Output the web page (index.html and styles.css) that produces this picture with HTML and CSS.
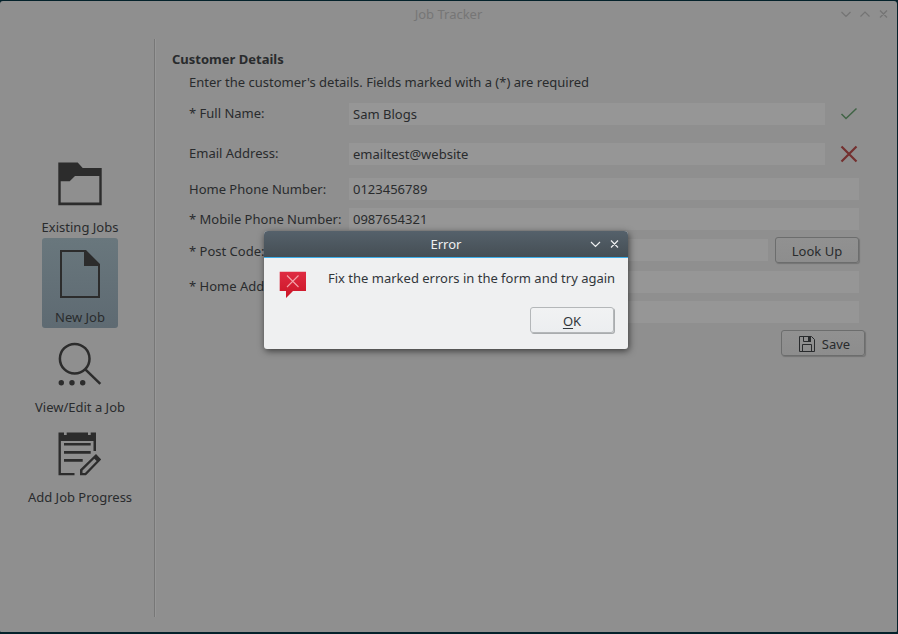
FILE: index.html
```html
<!DOCTYPE html>
<html lang="en">
<head>
<meta charset="utf-8">
<title>Job Tracker</title>
<link rel="stylesheet" href="styles.css">
</head>
<body>
<div class="window">
  <header class="titlebar">
    <span class="title">Job Tracker</span>
    <svg class="window-controls" width="50" height="12" viewBox="0 0 50 12"><path d="M1.500 4l4.500 4.500L10.500 4M20.500 8.500L25 4l4.500 4.500M40 2.500l7 7M47 2.500l-7 7"/></svg>
  </header>
  <div class="body">
    <nav class="sidebar">
      <a class="item">
        <svg width="48" height="48" viewBox="0 0 48 48"><path fill-rule="evenodd" d="M2.300 2.500H21.700L26.700 8H45.700V45.200H2.300ZM4.700 21.300V42.500H43.300V16H19L13.700 21.300Z"/></svg>
        <span>Existing Jobs</span>
      </a>
      <a class="item selected">
        <svg width="48" height="48" viewBox="0 0 48 48"><path fill-rule="evenodd" d="M4 0H30L44 14V48H4ZM6 2V46H42V16H28V2Z"/></svg>
        <span>New Job</span>
      </a>
      <a class="item">
        <svg width="48" height="48" viewBox="0 0 48 48"><circle class="line" cx="18.700" cy="18.700" r="14.800"/><path class="line" d="M29.300 29.300L44.300 43.800"/><circle cx="5.300" cy="42.700" r="2.700"/><circle cx="16" cy="42.700" r="2.700"/><circle cx="26.700" cy="42.700" r="2.700"/></svg>
        <span>View/Edit a Job</span>
      </a>
      <a class="item">
        <svg width="48" height="48" viewBox="0 0 48 48"><path fill-rule="evenodd" d="M2.500 2.500H8V5H10.700V2.500H32V5H34.700V2.500H40V21H37.500V11H4.900V43H18.500V45.300H2.500ZM8 13H34.700V15.600H8ZM8 21H34.700V23.700H8ZM8 29H26.700V31.700H8ZM24 45.300V39.500L40 24L45.200 29.500L30 45.300ZM26.500 43H29L40.700 31L38.300 28.800L26.500 40.500Z"/></svg>
        <span>Add Job Progress</span>
      </a>
    </nav>
    <main class="content">
      <h1>Customer Details</h1>
      <p class="intro">Enter the customer's details. Fields marked with a (*) are required</p>
      <form class="form">
        <div class="row name"><label>* Full Name:</label><div class="field">Sam Blogs</div><svg class="mark valid" width="18" height="18" viewBox="0 0 18 18"><path d="M1.500 9L6 13.500L16.500 3.500"/></svg></div>
        <div class="row email"><label>Email Address:</label><div class="field">emailtest@website</div><svg class="mark invalid" width="18" height="18" viewBox="0 0 18 18"><path d="M1.500 1.500l15 15M16.500 1.500l-15 15"/></svg></div>
        <div class="row phone"><label>Home Phone Number:</label><div class="field">0123456789</div></div>
        <div class="row mobile"><label>* Mobile Phone Number:</label><div class="field">0987654321</div></div>
        <div class="row post"><label>* Post Code:</label><div class="field"></div><div class="button lookup">Look Up</div></div>
        <div class="row address"><label>* Home Address:</label><div class="lines"><div class="field"></div><div class="field"></div></div></div>
        <div class="button save"><svg width="16" height="16" viewBox="0 0 16 16"><path d="M.5.5H12.500L15.500 3.500V15.500H.5ZM3.500 15V8.500H12.500V15M4.500 1V5.500H11.500V1"/><path class="solid" d="M9 1h3v5H9z"/></svg><span>Save</span></div>
      </form>
    </main>
  </div>
</div>
<section class="dialog" role="dialog">
  <header class="dialog-title">
    <span>Error</span>
    <svg width="30" height="12" viewBox="0 0 30 12"><path d="M1 4l4.500 4.500L10 4M21 2.500l7 7M28 2.500l-7 7"/></svg>
  </header>
  <div class="dialog-body">
    <svg class="alert" width="28" height="28" viewBox="0 0 28 28">
      <defs><linearGradient id="red" x2="0" y2="1"><stop stop-color="#df2b42"/><stop offset="1" stop-color="#cb1526"/></linearGradient></defs>
      <path fill="url(#red)" d="M.7.700H27V20H14L7 27V20H.700Z"/><path class="cross" d="M8 4.500l11.500 11.500M19.500 4.500L8 16"/>
    </svg>
    <p>Fix the marked errors in the form and try again</p>
    <div class="button ok"><span><u>O</u>K</span></div>
  </div>
</section>
</body>
</html>
```

FILE: styles.css
```css
* { box-sizing: border-box; }
body {
  margin: 0;
  height: 634px;
  padding: 1px 1px 2px 0;
  overflow: hidden;
  background: #04222b;
  color: #292b2d;
  font: 13px/18px "Noto Sans", sans-serif;
}
h1, p { margin: 0; font-size: inherit; }
.window {
  height: 631px;
  border-radius: 3px 3px 1px 1px;
  background: #8f8f8f;
}
.titlebar {
  display: grid;
  grid-template-columns: 1fr auto 1fr;
  align-items: center;
  height: 26px;
  color: #767676;
}
.title { grid-column: 2; }
.window-controls {
  justify-self: end;
  margin-right: 7px;
  fill: none;
  stroke: #747474;
  stroke-width: 1.200;
}
.body { display: flex; height: 605px; }
.sidebar {
  width: 156px;
  height: 578px;
  margin-top: 12px;
  padding: 109px 0 0 5px;
  border-right: 1px solid #979797;
  box-shadow: inset -1px 0 #777;
  display: flex;
  flex-direction: column;
  align-items: center;
}
.item {
  display: flex;
  flex-direction: column;
  align-items: center;
  height: 90px;
  width: 76px;
  padding-top: 12px;
  gap: 10px;
  white-space: nowrap;
}
.item svg { fill: #2c2c2c; flex: none; }
.item .line { fill: none; stroke: #2c2c2c; stroke-width: 2.500; }
.selected {
  border-radius: 3px;
  background: linear-gradient(#69777d, #5e6a72);
}
.content { width: 709px; padding: 23px 0 0 16px; }
.intro { padding: 5px 0 0 17px; }
.form { padding: 12px 0 0 17px; display: flex; flex-direction: column; }
.row { display: flex; width: 670px; height: 22px; }
.row label { width: 160px; flex: none; white-space: nowrap; padding-top: 2px; }
.name label, .email label { padding-top: 1px; }
.field {
  flex: 1;
  height: 22px;
  padding: 2px 4px;
  background: #969696;
}
.mark { width: 18px; margin: 2px 1px 0 15px; fill: none; }
.valid { stroke: #416446; stroke-width: 1.500; }
.invalid { stroke: #74302f; stroke-width: 2.200; }
.email { margin-top: 18px; }
.phone { margin-top: 13px; }
.mobile { margin-top: 8px; }
.post { margin-top: 9px; }
.post label { padding-top: 3px; }
.address { margin-top: 10px; height: 52px; }
.address label { padding-top: 6px; }
.lines { flex: 1; display: flex; flex-direction: column; gap: 8px; }
.lines .field { flex: none; }
.button {
  display: flex;
  align-items: center;
  justify-content: center;
  width: 84px;
  height: 26px;
  border: 1px solid #6c6d6d;
  border-radius: 3px;
  background: linear-gradient(#919191, #8d8d8d);
  box-shadow: 1px 1px 1px #747474;
}
.row .field + .lookup { margin: -2px 0 0 7px; padding-top: 2px; }
.save { margin: 7px 0 0 592px; gap: 7px; padding-top: 1px; padding-left: 3px; }
.save svg { fill: none; stroke: #292b2d; }
.save .solid { fill: #292b2d; stroke: none; }
.dialog {
  position: absolute;
  left: 264px;
  top: 231px;
  width: 364px;
  height: 118px;
  border-radius: 4px 4px 3px 3px;
  background: #eff0f1;
  box-shadow: 1px 2px 7px rgba(0, 0, 0, .6);
}
.dialog-title {
  display: grid;
  grid-template-columns: 1fr auto 1fr;
  align-items: center;
  height: 27px;
  border-bottom: 1px solid #3daee9;
  border-radius: 4px 4px 0 0;
  background: linear-gradient(#55616b, #454e54);
  color: #eff0f1;
}
.dialog-title span { grid-column: 2; }
.dialog-title svg { justify-self: end; margin-right: 8px; fill: none; stroke: #eff0f1; stroke-width: 1.200; }
.dialog-body {
  display: grid;
  grid-template-columns: 49px 286px;
  grid-template-rows: 38px 26px;
  padding: 11px 0 0 15px;
  color: #31363b;
}
.dialog-body p { white-space: nowrap; }
.alert { margin-top: 2px; }
.cross { fill: none; stroke: #f3a4aa; stroke-width: 1.100; }
.ok {
  grid-column: 2;
  justify-self: end;
  border-color: #b4b7b9;
  background: linear-gradient(#f1f2f3, #eceef0);
  box-shadow: 1px 1px 0 #a9acae;
  padding-top: 2px;
}
.ok u { text-underline-offset: 2px; }
```
